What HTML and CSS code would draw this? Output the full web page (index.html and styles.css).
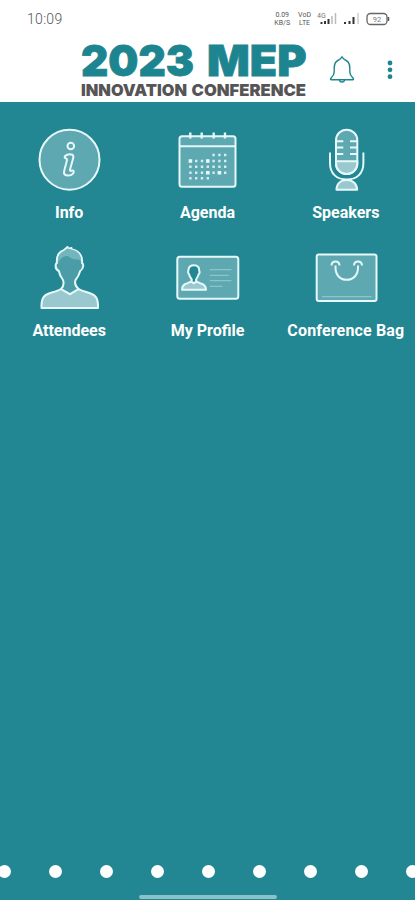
FILE: index.html
```html
<!DOCTYPE html>
<html lang="en">
<head>
    <meta charset="UTF-8">
    <meta name="viewport" content="width=device-width, initial-scale=1.0">
    <title>2023 MEP Innovation Conference</title>
    <link rel="stylesheet" href="styles.css">
</head>

<body>
    <header>
        <div class="status-bar">
            <span class="clock">10:09</span>
            <div class="status-icons">
                <span class="tiny">0.09<br>KB/S</span>
                <span class="tiny">VoD<br>LTE</span>
                <svg width="20" height="14" viewBox="0 0 20 14">
                    <text x="0" y="6" font-size="7">4G</text>
                    <path d="M4.5 10v2M8 9v3M11.5 7v5" stroke="#333" stroke-width="2" />
                    <path d="M15 4v8M18.5 1v11" stroke="#bbb" stroke-width="1.5" />
                </svg>
                <svg width="17" height="14" viewBox="0 0 17 14">
                    <path d="M2 10v2M6.5 9v3M10.5 5v7" stroke="#333" stroke-width="2" />
                    <path d="M15 1v11" stroke="#ccc" stroke-width="1.5" />
                </svg>
                <svg width="24" height="14" viewBox="0 0 24 14">
                    <rect x="1" y="1.5" width="20" height="11" rx="3.5" fill="none" stroke="#666" stroke-width="1.3" />
                    <path d="M22.5 5v4" stroke="#555" stroke-width="1.5" />
                    <text x="11" y="9.8" font-size="7.5" text-anchor="middle">92</text>
                </svg>
            </div>
        </div>
        <div class="app-bar">
            <svg class="logo" width="226" height="64" viewBox="0 0 226 64">
                <g class="logo-title">
                    <text x="0" y="38.300" textLength="113" lengthAdjust="spacingAndGlyphs">2023</text>
                    <text x="126" y="38.300" textLength="99.500" lengthAdjust="spacingAndGlyphs">MEP</text>
                </g>
                <g class="logo-subtitle">
                    <text x="0" y="57.500" textLength="106" lengthAdjust="spacingAndGlyphs">INNOVATION</text>
                    <text x="110.500" y="57.500" textLength="114.500" lengthAdjust="spacingAndGlyphs">CONFERENCE</text>
                </g>
            </svg>
            <svg class="bell" width="26" height="30" viewBox="0 0 26 30">
                <path d="M10.5 4.5C6.500 6 5.200 9 5.200 13v4c0 3-1.500 4.300-3.200 6q-1.200 1.500.5 1.800h21q1.700-.3.5-1.800c-1.700-1.700-3.200-3-3.200-6v-4c0-4-1.300-7-5.300-8.500" />
                <path d="M10.300 4.500q1-.4 2.700-2.700 1.700 2.300 2.700 2.700M10.300 25a2.800 2.800 0 0 0 5.400 0" />
            </svg>
            <svg class="more" width="6" height="20" viewBox="0 0 6 20">
                <circle cx="3" cy="3" r="2.400" />
                <circle cx="3" cy="9.800" r="2.400" />
                <circle cx="3" cy="16.700" r="2.400" />
            </svg>
        </div>
    </header>

    <main>
        <div class="menu-item">
            <svg class="icon" viewBox="0 0 70 70">
                <circle class="fill" cx="35.500" cy="34.700" r="30" />
                <circle cx="36.800" cy="21" r="3.300" />
                <path d="M31 31q3.500-2.800 7.500-1.200c1.700 1.200.8 3.200.2 5.200l-2.700 9.500q-.4 1.800 1.400 1.300c2.300-.8 3 1 1.800 2.500-2.500 3-9 3.200-9.200-.7-.1-2.500 3-10.600 3-13-.1-2-3.400-.6-2-3.600z" />
            </svg>
            <span>Info</span>
        </div>
        <div class="menu-item">
            <svg class="icon" viewBox="0 0 70 70">
                <rect class="fill" x="7.500" y="11.300" width="56" height="50.500" rx="2.500" />
                <path d="M7.500 21.300h56" />
                <path d="M18.300 7.500v6M29.700 7.500v6M41.700 7.500v6M53 7.500v6" stroke-width="2.400" />
                <g class="days">
                    <path d="M40.400 30H55" />
                    <path d="M17.200 36H55" />
                    <path d="M17.200 41.700H55" />
                    <path d="M17.200 47.700H55" />
                    <path d="M17.200 53.300H38" />
                </g>
                <path d="M16.600 36h3.600M34 36h3.600M34 47.700h3.600M45.600 47.700h3.600" stroke-width="3.400" />
            </svg>
            <span>Agenda</span>
        </div>
        <div class="menu-item">
            <svg class="icon" viewBox="0 0 70 70">
                <rect class="fill" x="25" y="4.700" width="21.300" height="44.300" rx="10.600" />
                <path class="solid" d="M25 36.200h21.300v2.200a10.600 10.600 0 0 1-21.300 0z" />
                <path d="M25 16.200h7.300M25 22.500h7.300M25 28.900h7.300M46.300 16.200H39M46.300 22.500H39M46.300 28.900H39" />
                <path d="M19 27.500V38c0 11 7 16.500 16.700 16.500s16.700-5.500 16.700-16.500V27.500" />
                <path class="solid" d="M25.500 64.800c0-6 4-9.800 10.200-9.800s10.400 3.800 10.400 9.800z" />
            </svg>
            <span>Speakers</span>
        </div>
        <div class="menu-item">
            <svg class="icon" viewBox="0 0 70 70">
                <path class="solid" d="M7.500 65c-.3-9.500 2-12.800 8-14.800 5-1.500 9-2.500 11.500-4.200l9 5.200 8.500-5.200c2.500 1.700 7 2.700 11.500 4.200 6 2 8.300 5.300 8 14.800z" />
                <path class="head" d="M36 51.200L27 46c3-3 3.200-5.500 2-9-2-2.500-3.500-5.500-4.200-9-2.300-1-3.500-3.500-3-6.500.2-1 .6-1.500 1.200-1.500-.8-7 2.500-11 6.500-12.500l4-3.500 1 1.800 3-.8v1.500c6.500 1 11.500 5.500 10.500 13.500 1 .3 1.300 1.500 1.200 3-.3 2.500-1.200 4-3 5-1 3.500-2.500 6.500-4.700 9-1.200 3.500-.3 6 3 9z" />
                <path class="hair" d="M24 20c-.8-6 2-10.500 6-12l3.500-2.500 4 1c5.500.7 10 5 9.500 12.500l-2-2.500q-7 .5-11-3.500c-4 0-7 1-10 7z" />
            </svg>
            <span>Attendees</span>
        </div>
        <div class="menu-item">
            <svg class="icon" viewBox="0 0 70 70">
                <rect class="fill" x="5.300" y="13.700" width="61" height="42" rx="2.500" />
                <path class="faint" d="M37.800 26.700h21.700M37.800 32.300h19M37.800 37.700h21.700M37.800 43.300h12.500" />
                <path class="solid" d="M10 46.700c0-4 2-5.700 5.500-6.500l4-1.700 2.300 1.800 2.300-1.800 4 1.700c3.500.8 5.900 2.500 5.900 6.500z" />
                <path class="face" d="M19.300 38.500c1-1.300.5-2.300-.5-3.500-1-1.300-1.300-2-1.600-3.500-2-2-1-3.500-.7-5 .5-3 2.500-4.200 5.500-4.200 3.500 0 5.600 2 5.200 5.500 1 1.700.3 2.800-.7 3.700-.4 1.500-.8 2.500-1.600 3.500-.9 1.200-1.400 2.200-.4 3.500l-2.600 1.700z" />
            </svg>
            <span>My Profile</span>
        </div>
        <div class="menu-item">
            <svg class="icon" viewBox="0 0 70 70">
                <rect class="fill" x="5.700" y="11.400" width="59.800" height="46.500" rx="2" />
                <path d="M20.500 22.500q.2-3.900 4-3.900t4 3.900M43 22.500q.2-3.900 4-3.900t4 3.900" />
                <path d="M24.500 22.500v2C24.500 32 29 36.800 35.700 36.800S47 32 47 24.500v-2" />
                <path class="faint" d="M11 53.700h49.800" />
            </svg>
            <span class="wide">Conference Bag</span>
        </div>
    </main>

    <footer>
        <div class="pager">
            <i></i><i></i><i></i><i></i><i></i><i></i><i></i><i></i><i></i>
        </div>
        <div class="home-bar"></div>
    </footer>
</body>

</html>
```
FILE: styles.css
```css
html, body {
    height: 100%;
    margin: 0;
}

body {
    display: flex;
    flex-direction: column;
    overflow: hidden;
    background-color: #228792;
    font-family: Roboto, sans-serif;
}

header {
    height: 102px;
    background-color: white;
}

.status-bar {
    display: flex;
    justify-content: space-between;
    align-items: center;
    height: 38px;
    padding: 0 25px 0 27px;
    color: #555;
}

.clock {
    font-size: 14px;
    font-weight: 300;
    letter-spacing: 0.3px;
}

.status-icons {
    display: flex;
    align-items: center;
    gap: 6px;
}

.status-icons text {
    fill: #777;
}

.tiny {
    font-size: 7px;
    line-height: 8px;
    text-align: center;
}

.tiny:first-child {
    margin-right: 2px;
}

.app-bar {
    display: flex;
    align-items: center;
    height: 64px;
    padding-left: 81px;
}

.logo {
    overflow: visible;
    font-family: Inter, sans-serif;
    font-weight: 900;
}

.logo-title {
    font-size: 43px;
    fill: #1d8590;
    stroke: #1d8590;
    stroke-width: 0.8px;
}

.logo-subtitle {
    font-size: 16.5px;
    fill: #555;
}

.bell {
    margin-left: 22px;
    fill: none;
    stroke: #1d8590;
    stroke-width: 1.4;
}

.more {
    margin-left: 32px;
    fill: #1d8590;
}

main {
    flex: 1;
    display: grid;
    grid-template-columns: repeat(3, 1fr);
    grid-auto-rows: 118px;
    padding-top: 23px;
}

.menu-item {
    display: flex;
    flex-direction: column;
    align-items: center;
    gap: 7px;
    color: white;
    font-size: 16px;
    font-weight: 700;
    line-height: 21px;
    white-space: nowrap;
}

.wide {
    letter-spacing: 0.15px;
}

.icon {
    width: 70px;
    height: 70px;
    fill: none;
    stroke: #e6f8fa;
    stroke-width: 2;
    stroke-linejoin: round;
}

.fill {
    fill: #5ea9b1;
}

.solid {
    fill: #99c9ce;
}

.head {
    fill: #4a9da7;
}

.hair {
    fill: #73b5bc;
    stroke: none;
}

.face {
    fill: #228792;
}

.days {
    stroke: #d3edf0;
    stroke-width: 2.4;
    stroke-dasharray: 2.4 3.4;
}

.faint {
    stroke: #8dc3c9;
    stroke-width: 1.3;
}

footer {
    display: flex;
    flex-direction: column;
    align-items: center;
    gap: 17px;
    padding-bottom: 1px;
}

.pager {
    display: flex;
    gap: 38px;
    padding-left: 1px;
}

.pager i {
    flex: none;
    width: 13px;
    height: 13px;
    border-radius: 50%;
    background-color: white;
}

.home-bar {
    width: 138px;
    height: 4px;
    border-radius: 2px;
    background-color: #8ac2ca;
}
```
